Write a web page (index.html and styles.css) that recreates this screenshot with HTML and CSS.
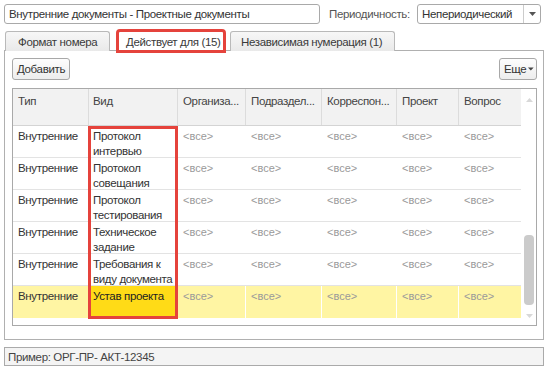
FILE: index.html
```html
<!DOCTYPE html>
<html lang="ru">
<head>
<meta charset="utf-8">
<link rel="stylesheet" href="styles.css">
</head>
<body>
<div class="top">
  <div class="field name">Внутренние документы - Проектные документы</div>
  <span class="label">Периодичность:</span>
  <div class="field select"><span class="sel-text">Непериодический</span><span class="sel-btn"><svg width="7" height="4" viewBox="0 0 7 4"><path d="M0 0h7L3.5 4z" fill="#555"/></svg></span></div>
</div>
<div class="tabs">
  <div class="tab t1">Формат номера</div>
  <div class="tab active">Действует для (15)</div>
  <div class="tab t3">Независимая нумерация (1)</div>
</div>
<div class="panel">
  <div class="toolbar">
    <div class="btn">Добавить</div>
    <div class="btn more">Еще <svg width="7" height="4" viewBox="0 0 7 4"><path d="M0 0h7L3.5 4z" fill="#444"/></svg></div>
  </div>
  <div class="grid">
    <div class="grid-body">
      <div class="row head">
        <div class="c c1">Тип</div><div class="c c2">Вид</div><div class="c c3">Организа...</div><div class="c c4">Подраздел...</div><div class="c c5">Корреспон...</div><div class="c c6">Проект</div><div class="c c7">Вопрос</div>
      </div>
      <div class="row"><div class="c c1">Внутренние</div><div class="c c2">Протокол интервью</div><div class="c c3 all">&lt;все&gt;</div><div class="c c4 all">&lt;все&gt;</div><div class="c c5 all">&lt;все&gt;</div><div class="c c6 all">&lt;все&gt;</div><div class="c c7 all">&lt;все&gt;</div></div>
      <div class="row"><div class="c c1">Внутренние</div><div class="c c2">Протокол совещания</div><div class="c c3 all">&lt;все&gt;</div><div class="c c4 all">&lt;все&gt;</div><div class="c c5 all">&lt;все&gt;</div><div class="c c6 all">&lt;все&gt;</div><div class="c c7 all">&lt;все&gt;</div></div>
      <div class="row"><div class="c c1">Внутренние</div><div class="c c2">Протокол тестирования</div><div class="c c3 all">&lt;все&gt;</div><div class="c c4 all">&lt;все&gt;</div><div class="c c5 all">&lt;все&gt;</div><div class="c c6 all">&lt;все&gt;</div><div class="c c7 all">&lt;все&gt;</div></div>
      <div class="row"><div class="c c1">Внутренние</div><div class="c c2">Техническое задание</div><div class="c c3 all">&lt;все&gt;</div><div class="c c4 all">&lt;все&gt;</div><div class="c c5 all">&lt;все&gt;</div><div class="c c6 all">&lt;все&gt;</div><div class="c c7 all">&lt;все&gt;</div></div>
      <div class="row"><div class="c c1">Внутренние</div><div class="c c2">Требования к виду документа</div><div class="c c3 all">&lt;все&gt;</div><div class="c c4 all">&lt;все&gt;</div><div class="c c5 all">&lt;все&gt;</div><div class="c c6 all">&lt;все&gt;</div><div class="c c7 all">&lt;все&gt;</div></div>
      <div class="row sel"><div class="c c1">Внутренние</div><div class="c c2 cur">Устав проекта</div><div class="c c3 all">&lt;все&gt;</div><div class="c c4 all">&lt;все&gt;</div><div class="c c5 all">&lt;все&gt;</div><div class="c c6 all">&lt;все&gt;</div><div class="c c7 all">&lt;все&gt;</div></div>
    </div>
    <div class="scroll">
      <svg class="arr" width="7" height="4" viewBox="0 0 7 4"><path d="M0 4h7L3.5 0z" fill="#d8d8d8"/></svg>
      <div class="track"><div class="thumb"></div></div>
      <svg class="arr" width="7" height="4" viewBox="0 0 7 4"><path d="M0 0h7L3.5 4z" fill="#d8d8d8"/></svg>
    </div>
    <div class="mark"></div>
  </div>
</div>
<div class="status">Пример: ОРГ-ПР- АКТ-12345</div>
</body>
</html>
```
FILE: styles.css
```css
* { box-sizing: border-box; }
body {
  margin: 0;
  width: 548px;
  height: 372px;
  background: #fff;
  font-family: "Liberation Sans", Arial, sans-serif;
  font-size: 11.5px;
  letter-spacing: -0.35px;
  color: #333;
  overflow: hidden;
}
.top {
  display: flex;
  align-items: center;
  padding: 4px 7px 0 4px;
  height: 24px;
}
.field {
  height: 20px;
  border: 1px solid #a9a9a9;
  border-radius: 3px;
  background: #fff;
  display: flex;
  align-items: center;
  padding-left: 4px;
  color: #333;
  white-space: nowrap;
}
.name { width: 316px; }
.label { margin-left: 9px; color: #555; width: 88px; white-space: nowrap; }
.select { width: 124px; justify-content: space-between; }
.sel-btn {
  width: 17px;
  height: 100%;
  border-left: 1px solid #ccc;
  display: flex;
  align-items: center;
  justify-content: center;
}
.tabs {
  display: flex;
  padding: 6px 0 0 5px;
  height: 27px;
  margin-bottom: -1px;
  position: relative;
  z-index: 1;
  align-items: flex-end;
}
.tab {
  height: 20px;
  border: 1px solid #b9b9b9;
  border-bottom: none;
  border-radius: 3px 3px 0 0;
  background: linear-gradient(#f7f7f7, #e9e9e9);
  display: flex;
  align-items: center;
  color: #3a3a3a;
  white-space: nowrap;
}
.t1 { width: 105px; padding-left: 12px; }
.t3 { width: 165px; padding-left: 10px; margin-left: 5px; }
.tab.active {
  width: 108px;
  margin-left: 7px;
  background: #fff;
  height: 22px;
  padding-left: 8px;
  outline: 3px solid #e5433c;
  outline-offset: -2px;
  border-color: #fff;
  position: relative;
  top: 1px;
}
.panel {
  margin: 0 4px 0 4px;
  height: 290px;
  border: 1px solid #b0b0b0;
  padding: 7px 6px 0 7px;
}
.toolbar {
  display: flex;
  justify-content: space-between;
  height: 22px;
  margin-bottom: 8px;
}
.btn {
  height: 22px;
  border: 1px solid #a8a8a8;
  border-radius: 3px;
  background: linear-gradient(#fdfdfd, #ededed);
  display: flex;
  align-items: center;
  gap: 3px;
  padding: 0 4px 0 4px;
  color: #333;
  white-space: nowrap;
}
.btn.more { width: 38px; padding: 0 2px 0 4px; gap: 2px; }
.grid {
  position: relative;
  height: 238px;
  border: 1px solid #a9a9a9;
  display: flex;
}
.grid-body { width: 508px; }
.row {
  display: flex;
  height: 32px;
  border-bottom: 1px solid #e3e3e3;
}
.row.head {
  height: 37px;
  background: #f2f2f2;
  border-bottom: 1px solid #d4d4d4;
}
.head .c { border-right: 1px solid #dcdcdc; padding-top: 5px; color: #444; }
.head .c7 { border-right: none; }
.c {
  padding: 3px 3px 0 5px;
  line-height: 15px;
  overflow: hidden;
  color: #333;
}
.c1 { width: 76px; }
.c2 { width: 89px; padding-left: 4px; padding-right: 1px; }
.c3 { width: 68px; }
.c4 { width: 76px; }
.c5 { width: 75px; }
.c6 { width: 62px; }
.c7 { width: 62px; }
.all { color: #9a9a9a; white-space: nowrap; font-size: 11px; letter-spacing: 0; }
.row.sel { background: #fff5a3; border-bottom: none; }
.sel .c { border-right: 1px solid #fff; }
.sel .c7 { border-right: none; }
.sel .cur { background: #ffdb17; color: #222; }
.scroll {
  width: 17px;
  display: flex;
  flex-direction: column;
  align-items: center;
  padding: 9px 0 7px 1px;
}
.track { flex: 1; width: 100%; display: flex; justify-content: center; padding-top: 133px; padding-bottom: 9px; }
.thumb { width: 10px; height: 70px; background: #cbcbcb; border-radius: 4px; }
.mark {
  position: absolute;
  left: 75px;
  top: 37px;
  width: 90px;
  height: 193px;
  border: 3px solid #e5433c;
}
.status {
  margin: 7px 4px 0 4px;
  height: 19px;
  border: 1px solid #aaa;
  background: #f4f4f4;
  padding-left: 3px;
  display: flex;
  align-items: center;
  color: #444;
  white-space: nowrap;
}
```
